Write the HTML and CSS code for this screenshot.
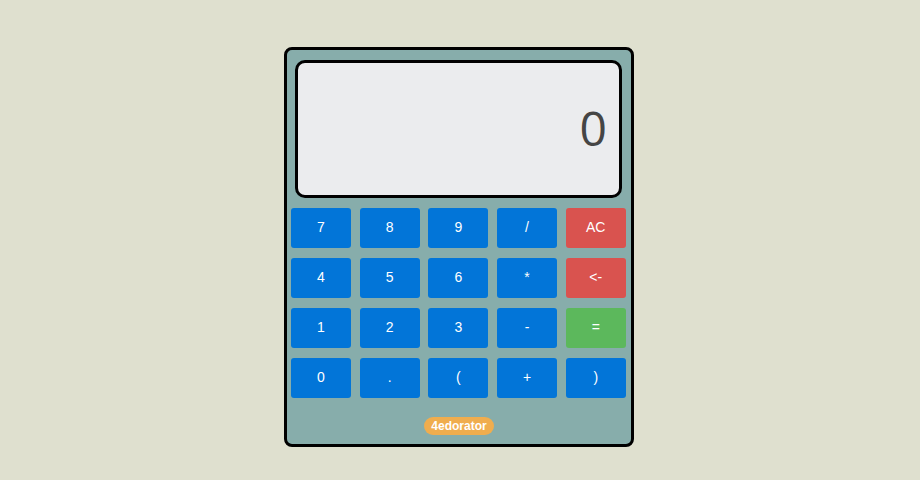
FILE: index.html
```html
<!DOCTYPE html>
<html>
<head>
<meta charset="utf-8">
<link rel="stylesheet" href="styles.css">
</head>
<body>
<div class="page">
  <div class="calc">
    <div class="display"><span class="value">0</span></div>
    <div class="keys">
      <button class="key">7</button>
      <button class="key">8</button>
      <button class="key">9</button>
      <button class="key">/</button>
      <button class="key danger">AC</button>
      <button class="key">4</button>
      <button class="key">5</button>
      <button class="key">6</button>
      <button class="key">*</button>
      <button class="key danger">&lt;-</button>
      <button class="key">1</button>
      <button class="key">2</button>
      <button class="key">3</button>
      <button class="key">-</button>
      <button class="key success">=</button>
      <button class="key">0</button>
      <button class="key">.</button>
      <button class="key">(</button>
      <button class="key">+</button>
      <button class="key">)</button>
    </div>
    <div class="footer"><span class="badge">4edorator</span></div>
  </div>
</div>
</body>
</html>
```
FILE: styles.css
```css
html, body {
  margin: 0;
  padding: 0;
}
body {
  background: #dfe0cf;
  font-family: "Liberation Sans", Arial, sans-serif;
}
.page {
  width: 920px;
  height: 480px;
  display: flex;
  justify-content: center;
  padding-top: 47px;
  box-sizing: border-box;
}
.calc {
  width: 350px;
  height: 400px;
  box-sizing: border-box;
  border: 3px solid #000;
  border-radius: 8px;
  background: #87adab;
  padding: 10px 5px 0 4px;
  display: flex;
  flex-direction: column;
  margin-left: -2px;
}
.display {
  margin: 0 4px 0 4px;
  height: 138px;
  box-sizing: border-box;
  border: 3px solid #000;
  border-radius: 10px;
  background: #ebecee;
  display: flex;
  align-items: center;
  justify-content: flex-end;
  padding-right: 12px;
}
.value {
  font-family: "Open Sans", "Liberation Sans", sans-serif;
  font-size: 48px;
  color: #454545;
  line-height: 1;
  margin-top: -2px;
}
.keys {
  margin-top: 10px;
  display: grid;
  grid-template-columns: repeat(5, 60px);
  grid-auto-rows: 40px;
  column-gap: 8.7px;
  row-gap: 10px;
}
.key {
  border: none;
  border-radius: 3px;
  background: #0275d8;
  color: #fff;
  font-family: "Liberation Sans", Arial, sans-serif;
  font-size: 14px;
  padding: 0 0 2px 0;
  margin: 0;
}
.key.danger {
  background: #d9534f;
}
.key.success {
  background: #5cb85c;
}
.footer {
  display: flex;
  justify-content: center;
  margin-top: 19px;
  padding-left: 1px;
}
.badge {
  background: #f0ad4e;
  color: #fff;
  font-weight: bold;
  font-size: 12px;
  line-height: 18px;
  padding: 0 7px;
  border-radius: 9px;
}
```
